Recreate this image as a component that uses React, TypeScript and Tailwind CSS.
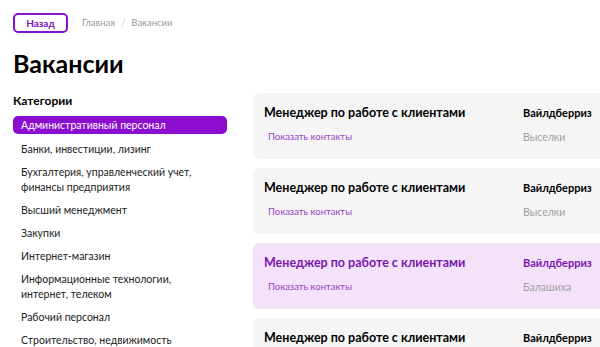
import { FC } from "react";

interface Vacancy {
    id: number;
    title: string;
    company: string;
    city: string;
    active?: boolean;
}

const categories: string[] = [
    "Административный персонал",
    "Банки, инвестиции, лизинг",
    "Бухгалтерия, управленческий учет, финансы предприятия",
    "Высший менеджмент",
    "Закупки",
    "Интернет-магазин",
    "Информационные технологии, интернет, телеком",
    "Рабочий персонал",
    "Строительство, недвижимость",
];

const vacancies: Vacancy[] = [
    { id: 1, title: "Менеджер по работе с клиентами", company: "Вайлдберриз", city: "Выселки" },
    { id: 2, title: "Менеджер по работе с клиентами", company: "Вайлдберриз", city: "Выселки" },
    { id: 3, title: "Менеджер по работе с клиентами", company: "Вайлдберриз", city: "Балашиха", active: true },
    { id: 4, title: "Менеджер по работе с клиентами", company: "Вайлдберриз", city: "Выселки" },
];

const App: FC = () => {
    return (
        <div
            className="w-[600px] h-[347px] overflow-hidden bg-white text-black pl-[13px] pt-[13px]"
            style={{ fontFamily: 'Lato, "Open Sans", sans-serif' }}
        >
            {/* header */}
            <div className="flex items-center">
                <button className="h-[20px] w-[55px] rounded-[5px] border-2 border-[#8a12c9] text-[10px] font-bold text-[#7a12b5] leading-none">
                    Назад
                </button>
                <nav className="ml-[14px] flex items-center text-[9.5px] text-[#9a9a9a]">
                    <span>Главная</span>
                    <span className="mx-[6px] text-[#d0d0d0]">/</span>
                    <span>Вакансии</span>
                </nav>
            </div>

            <h1 className="mt-[14px] text-[25px] leading-[32px] font-bold">Вакансии</h1>

            <div className="mt-[14px] flex">
                {/* categories */}
                <aside className="w-[214px] shrink-0">
                    <h2 className="text-[12px] leading-[16px] font-bold">Категории</h2>
                    <ul className="mt-[7px] flex flex-col gap-[8px]">
                        {categories.map((c, i) => (
                            <li
                                key={c}
                                className={
                                    i === 0
                                        ? "rounded-[5px] bg-[#8b0dd0] px-[8px] text-[10.5px] leading-[18px] text-white"
                                        : "px-[8px] text-[10.5px] leading-[15px] text-[#222]"
                                }
                            >
                                {c}
                            </li>
                        ))}
                    </ul>
                </aside>

                {/* vacancies */}
                <section className="ml-[26px] w-[420px] shrink-0 flex flex-col gap-[9px]">
                    {vacancies.map((v) => (
                        <div
                            key={v.id}
                            className={`h-[66px] rounded-[6px] pl-[11px] pt-[11px] grid grid-cols-[259px_1fr] ${
                                v.active ? "bg-[#f3e2fa]" : "bg-[#f5f5f5]"
                            }`}
                        >
                            <div>
                                <p
                                    className={`text-[12.5px] leading-[18px] font-bold ${
                                        v.active ? "text-[#7a16ae]" : "text-black"
                                    }`}
                                >
                                    {v.title}
                                </p>
                                <button className="mt-[8px] ml-[4px] text-[9.5px] leading-[14px] text-[#9a3ec8]">
                                    Показать контакты
                                </button>
                            </div>
                            <div>
                                <p
                                    className={`text-[11px] leading-[18px] font-bold ${
                                        v.active ? "text-[#7a16ae]" : "text-black"
                                    }`}
                                >
                                    {v.company}
                                </p>
                                <p className="mt-[8px] text-[10.5px] leading-[14px] text-[#a0a0a0]">{v.city}</p>
                            </div>
                        </div>
                    ))}
                </section>
            </div>
        </div>
    );
};

export default App;
